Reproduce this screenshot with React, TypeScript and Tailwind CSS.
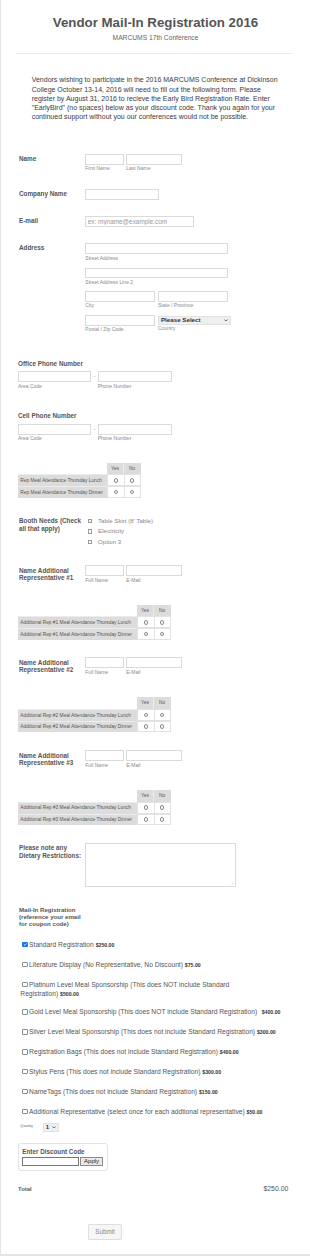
import React from "react";

function Inp({ w, h = "h-[10.5px]", ph }: { w: string; h?: string; ph?: string }) {
  return (
    <input
      readOnly
      placeholder={ph}
      className={`${w} ${h} block border border-[#dadada] bg-white px-[1.5px] text-[6.4px] text-[#555] outline-none placeholder:text-[#9a9a9a]`}
    />
  );
}

function Sub({ children, className = "" }: { children: React.ReactNode; className?: string }) {
  return <div className={`mt-[1.8px] text-[5px] leading-[5px] text-[#8a8a8a] whitespace-nowrap ${className}`}>{children}</div>;
}

function Label({ children, className = "" }: { children: React.ReactNode; className?: string }) {
  return <div className={`w-[67.3px] shrink-0 pl-[1px] font-bold text-[6.35px] text-[#555] ${className}`}>{children}</div>;
}

function Radio() {
  return <span className="block w-[4.6px] h-[4.6px] rounded-full border-[0.6px] border-[#8a8a8a] bg-white" />;
}

function Matrix({ labelW, rows }: { labelW: string; rows: string[] }) {
  return (
    <div className="text-[4.8px] text-[#555]">
      <div className="flex h-[11.6px]">
        <div className={`${labelW}`} />
        <div className="w-[16.3px] bg-[#dcdcdc] flex items-center justify-center border-r border-[#ececec]">Yes</div>
        <div className="w-[17px] bg-[#dcdcdc] flex items-center justify-center">No</div>
      </div>
      {rows.map((r, i) => (
        <div key={i} className={`flex ${i === 0 ? "h-[12px]" : "h-[11.4px]"}`}>
          <div className={`${labelW} bg-[#dcdcdc] flex items-center pl-[2.3px] whitespace-nowrap border-t border-[#ececec]`}>{r}</div>
          <div className="w-[16.3px] bg-white border border-[#e2e2e2] border-r-0 flex items-center justify-center">
            <Radio />
          </div>
          <div className="w-[17px] bg-white border border-[#e2e2e2] flex items-center justify-center">
            <Radio />
          </div>
        </div>
      ))}
    </div>
  );
}

function Box({ checked = false }: { checked?: boolean }) {
  return checked ? (
    <span className="inline-flex align-middle items-center justify-center w-[5.4px] h-[5.4px] ml-[2px] mr-[1.4px] rounded-[1px] bg-[#1a73e8] relative -top-[0.3px]">
      <svg viewBox="0 0 10 10" className="w-[4.6px] h-[4.6px]">
        <path d="M2 5.2 L4.2 7.3 L8.2 2.8" stroke="white" strokeWidth="1.6" fill="none" />
      </svg>
    </span>
  ) : (
    <span className="inline-block align-middle w-[5.4px] h-[5.4px] ml-[2px] mr-[1.4px] rounded-[1px] border-[0.7px] border-[#8a8a8a] bg-white relative -top-[0.3px]" />
  );
}

function Item({ children, price, className = "h-[9.4px]", priceCls = "" }: { children: React.ReactNode; price: string; className?: string; priceCls?: string }) {
  return (
    <div className={`text-[6.7px] leading-[9.4px] text-[#555] ${className}`}>
      {children}
      <b className={`text-[5.2px] leading-[9.4px] text-[#333] ${priceCls}`}>{price}</b>
    </div>
  );
}

function RepRow({ n, h }: { n: number; h: string }) {
  return (
    <div className={`flex ${h}`}>
      <Label className="pt-[1.35px] leading-[7.3px]">
        Name Additional
        <br />
        Representative #{n}
      </Label>
      <div className="flex gap-[2.6px]">
        <div>
          <Inp w="w-[38.4px]" />
          <Sub>Full Name</Sub>
        </div>
        <div>
          <Inp w="w-[56px]" />
          <Sub>E-Mail</Sub>
        </div>
      </div>
    </div>
  );
}

function Chevron() {
  return (
    <svg viewBox="0 0 10 6" className="w-[4px] h-[2.6px]">
      <path d="M1 1 L5 5 L9 1" stroke="#333" strokeWidth="1.8" fill="none" />
    </svg>
  );
}

export default function App() {
  return (
    <div className="w-[310px] h-[1256px] bg-white font-['Liberation_Sans',Arial,sans-serif] text-[#555]">
      <div className="h-[1256px] box-border border-l border-b-2 border-[#e4e4e4]">
        {/* header */}
        <div className="pt-[15px] text-center">
          <div className="text-[13.3px] leading-[16px] font-bold text-[#555]">Vendor Mail-In Registration 2016</div>
          <div className="mt-[3px] text-[6.7px] leading-[8px] text-[#666]">MARCUMS 17th Conference</div>
        </div>
        <div className="mt-[11px] ml-[15px] w-[277px] h-px bg-[#ececec]" />
        <div className="mt-[21.4px] pl-[30.7px] pr-[25px] text-[7px] leading-[9.15px] text-[#3a3a46]">
          Vendors wishing to participate in the 2016 MARCUMS Conference at Dickinson College October 13-14, 2016 will need to fill out the following form. Please register by August 31, 2016 to recieve the Early Bird Registration Rate. Enter "EarlyBird" (no spaces) below as your discount code. Thank you again for your continued support without you our conferences would not be possible.
        </div>

        <div className="px-[17px] mt-[32.85px]">
          {/* Name */}
          <div className="flex h-[35.3px]">
            <Label className="leading-[10.5px]">Name</Label>
            <div className="flex gap-[2.6px]">
              <div>
                <Inp w="w-[38.4px]" />
                <Sub>First Name</Sub>
              </div>
              <div>
                <Inp w="w-[56px]" />
                <Sub>Last Name</Sub>
              </div>
            </div>
          </div>
          {/* Company */}
          <div className="flex h-[27px]">
            <Label className="leading-[10.5px]">Company Name</Label>
            <Inp w="w-[73.4px]" h="h-[11px]" />
          </div>
          {/* Email */}
          <div className="flex h-[27px]">
            <Label className="leading-[10.5px]">E-mail</Label>
            <Inp w="w-[108.4px]" h="h-[11px]" ph="ex: myname@example.com" />
          </div>
          {/* Address */}
          <div className="flex h-[116.4px]">
            <Label className="leading-[10.5px]">Address</Label>
            <div className="flex flex-col gap-[6.4px]">
              <div>
                <Inp w="w-[142.4px]" h="h-[11px]" />
                <Sub className="mt-[1.5px]">Street Address</Sub>
              </div>
              <div>
                <Inp w="w-[142.4px]" />
                <Sub>Street Address Line 2</Sub>
              </div>
              <div className="flex gap-[3.3px]">
                <div>
                  <Inp w="w-[69.4px]" />
                  <Sub>City</Sub>
                </div>
                <div>
                  <Inp w="w-[69.7px]" />
                  <Sub>State / Province</Sub>
                </div>
              </div>
              <div className="flex gap-[3.3px]">
                <div>
                  <Inp w="w-[69.4px]" h="h-[10.7px]" />
                  <Sub>Postal / Zip Code</Sub>
                </div>
                <div>
                  <div className="mt-[0.7px] w-[72.7px] h-[9px] bg-[#efefef] border border-[#e2e2e2] flex items-center justify-between px-[2px] text-[6.2px] font-bold text-[#333]">
                    <span>Please Select</span>
                    <Chevron />
                  </div>
                  <Sub className="mt-[1.5px]">Country</Sub>
                </div>
              </div>
            </div>
          </div>
          {/* Phones */}
          {[
            ["Office Phone Number", "h-[52.3px]"],
            ["Cell Phone Number", "h-[50.7px]"],
          ].map(([t, h]) => (
            <div key={t} className={h}>
              <div className="font-bold text-[6.35px] leading-[8px] text-[#555]">{t}</div>
              <div className="mt-[3.6px] flex">
                <div>
                  <Inp w="w-[73.3px]" h="h-[11px]" />
                  <Sub>Area Code</Sub>
                </div>
                <div className="w-[6.4px] text-center text-[6px] leading-[11px] text-[#999]">-</div>
                <div>
                  <Inp w="w-[74px]" h="h-[11px]" />
                  <Sub>Phone Number</Sub>
                </div>
              </div>
            </div>
          ))}
          {/* Matrix 1 */}
          <div className="h-[53.05px]">
            <Matrix labelW="w-[89.3px]" rows={["Rep Meal Attendance Thursday Lunch", "Rep Meal Attendance Thursday Dinner"]} />
          </div>
          {/* Booth */}
          <div className="flex h-[49.55px]">
            <Label className="pt-[1.7px] leading-[7.7px]">
              Booth Needs (Check
              <br />
              all that apply)
            </Label>
            <div className="text-[6.1px] leading-[10.5px] text-[#888]">
              {["Table Skirt (8' Table)", "Electricity", "Option 3"].map((o) => (
                <div key={o} className="flex items-center">
                  <span className="ml-[2.7px] mr-[5.6px] w-[4.5px] h-[4.5px] border-[0.7px] border-[#9a9a9a] bg-white" />
                  {o}
                </div>
              ))}
            </div>
          </div>
          <RepRow n={1} h="h-[39.4px]" />
          <div className="h-[52.6px]">
            <Matrix
              labelW="w-[119.3px]"
              rows={["Additional Rep #1 Meal Attendance Thursday Lunch", "Additional Rep #1 Meal Attendance Thursday Dinner"]}
            />
          </div>
          <RepRow n={2} h="h-[40px]" />
          <div className="h-[53px]">
            <Matrix
              labelW="w-[119.3px]"
              rows={["Additional Rep #2 Meal Attendance Thursday Lunch", "Additional Rep #2 Meal Attendance Thursday Dinner"]}
            />
          </div>
          <RepRow n={3} h="h-[39.7px]" />
          <div className="h-[53.3px]">
            <Matrix
              labelW="w-[119.3px]"
              rows={["Additional Rep #3 Meal Attendance Thursday Lunch", "Additional Rep #3 Meal Attendance Thursday Dinner"]}
            />
          </div>
          {/* Dietary */}
          <div className="flex h-[62.4px]">
            <Label className="pt-[0.75px] leading-[7.6px]">
              Please note any
              <br />
              Dietary Restrictions:
            </Label>
            <div className="relative w-[150.7px] h-[43.4px] border border-[#dadada] bg-white">
              <svg viewBox="0 0 6 6" className="absolute right-[0.5px] bottom-[0.5px] w-[3px] h-[3px]">
                <path d="M1 5 L5 1 M3 5 L5 3" stroke="#aaa" strokeWidth="0.8" />
              </svg>
            </div>
          </div>
          {/* Payment */}
          <div className="pl-[1px] font-bold text-[6.1px] leading-[7.2px] text-[#555]">
            Mail-In Registration
            <br />
            (reference your email
            <br />
            for coupon code)
          </div>
          <div className="pl-[2.3px] mt-[12.3px] flex flex-col gap-[10.6px]">
            <Item price="$250.00">
              <Box checked />
              Standard Registration{" "}
            </Item>
            <Item price="$75.00">
              <Box />
              Literature Display (No Representative, No Discount){" "}
            </Item>
            <Item price="$500.00" className="h-[16.8px]">
              <Box />
              Platinum Level Meal Sponsorship (This does NOT include Standard
              <br />
              Registration){" "}
            </Item>
            <Item price="$400.00" priceCls="ml-[2.6px]">
              <Box />
              Gold Level Meal Sponsorship (This does NOT include Standard Registration){" "}
            </Item>
            <Item price="$300.00">
              <Box />
              Silver Level Meal Sponsorship (This does not include Standard Registration){" "}
            </Item>
            <Item price="$400.00">
              <Box />
              Registration Bags (This does not include Standard Registration){" "}
            </Item>
            <Item price="$300.00">
              <Box />
              Stylus Pens (This does not include Standard Registration){" "}
            </Item>
            <Item price="$150.00">
              <Box />
              NameTags (This does not include Standard Registration){" "}
            </Item>
            <Item price="$50.00">
              <Box />
              Additional Representative (select once for each addtional representative){" "}
            </Item>
          </div>
          <div className="mt-[6.3px] pl-[2.3px] flex items-center h-[9px]">
            <span className="text-[3.4px] text-[#666] w-[22.4px]">Quantity</span>
            <div className="w-[16px] h-[9px] bg-[#efefef] border border-[#e2e2e2] flex items-center justify-between px-[2px] text-[6px] font-bold text-[#333]">
              <span>1</span>
              <Chevron />
            </div>
          </div>
          {/* Discount */}
          <div className="mt-[11.3px] -ml-[0.3px] w-[90px] h-[28.4px] rounded-[3px] border border-[#e2e2e2] px-[3.6px] pt-[4px]">
            <div className="font-bold text-[6.3px] leading-[8px] text-[#555]">Enter Discount Code</div>
            <div className="mt-[1.6px] flex items-center gap-[0.6px]">
              <div className="w-[58px] h-[8.3px] border-[0.7px] border-[#767676] bg-white" />
              <div className="w-[23.4px] h-[8.3px] border-[0.7px] border-[#8a8a8a] bg-[#e9e9e9] flex items-center justify-center text-[6px] text-[#222]">
                Apply
              </div>
            </div>
          </div>
          {/* Total */}
          <div className="mt-[14px] flex justify-between items-center h-[8px] pr-[4.7px]">
            <span className="font-bold text-[5.9px] text-[#555]">Total</span>
            <span className="text-[6.9px] text-[#555]">$250.00</span>
          </div>
          {/* Submit */}
          <div className="mt-[30.6px] pl-[70px]">
            <div className="w-[34px] h-[16px] rounded-[1px] border border-[#dedede] bg-[#f6f6f6] flex items-center justify-center text-[6.3px] text-[#888]">
              Submit
            </div>
          </div>
        </div>
      </div>
    </div>
  );
}
